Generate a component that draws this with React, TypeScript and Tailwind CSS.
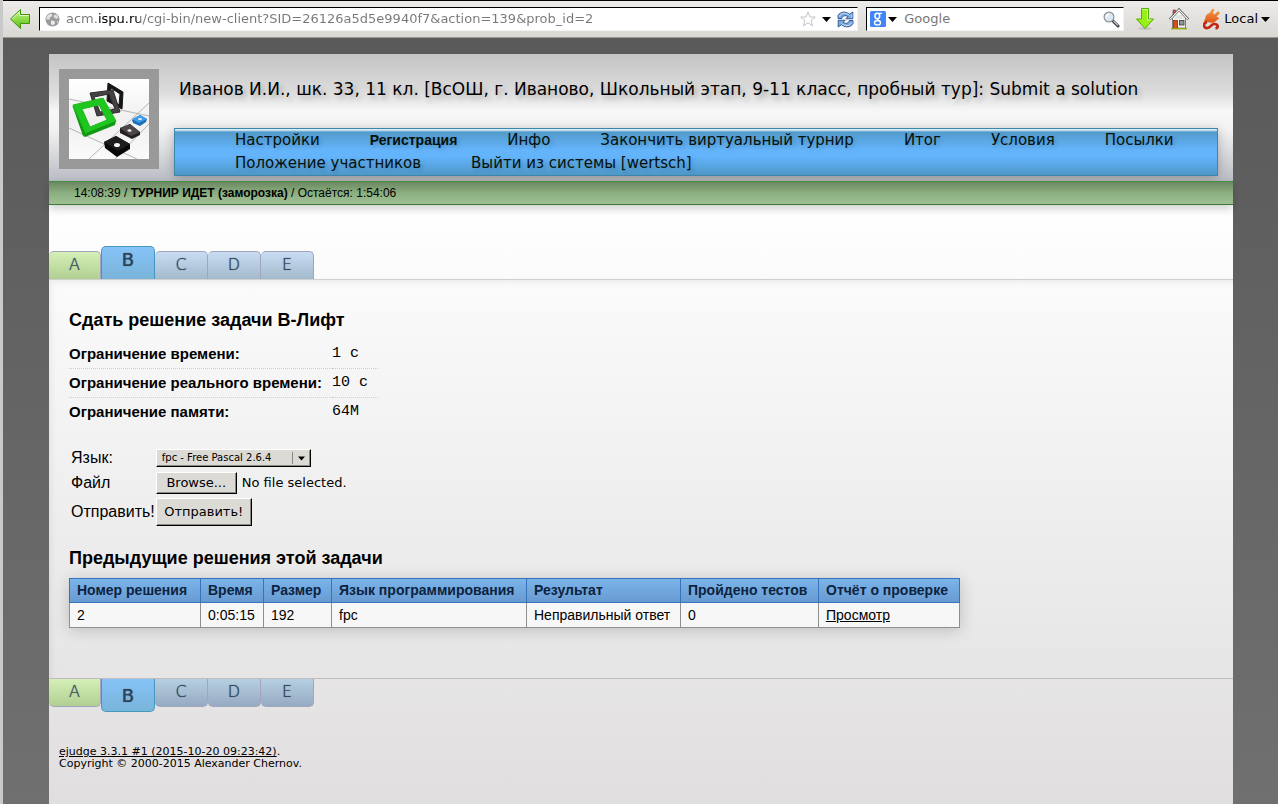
import { useRef } from 'react';

type Tab = { id: string; state: 'solved' | 'active' | 'idle' };

const tabs: Tab[] = [
  { id: 'A', state: 'solved' },
  { id: 'B', state: 'active' },
  { id: 'C', state: 'idle' },
  { id: 'D', state: 'idle' },
  { id: 'E', state: 'idle' },
];

const menu = [
  { label: 'Настройки' },
  { label: 'Регистрация', bold: true },
  { label: 'Инфо' },
  { label: 'Закончить виртуальный турнир' },
  { label: 'Итог' },
  { label: 'Условия' },
  { label: 'Посылки' },
  { label: 'Положение участников' },
  { label: 'Выйти из системы [wertsch]' },
];

const limits = [
  { label: 'Ограничение времени:', value: '1 с' },
  { label: 'Ограничение реального времени:', value: '10 с' },
  { label: 'Ограничение памяти:', value: '64M' },
];

const columns = [
  { name: 'Номер решения', width: 'w-[131px]' },
  { name: 'Время', width: 'w-[63px]' },
  { name: 'Размер', width: 'w-[68px]' },
  { name: 'Язык программирования', width: 'w-[195px]' },
  { name: 'Результат', width: 'w-[154px]' },
  { name: 'Пройдено тестов', width: 'w-[138px]' },
  { name: 'Отчёт о проверке', width: 'w-[141px]' },
];
const runs = [['2', '0:05:15', '192', 'fpc', 'Неправильный ответ', '0']];

const bevel =
  'bg-[#dcdad5] border border-t-white border-l-white border-r-black border-b-black shadow-[inset_-1px_-1px_0_#8b8984]';

const sunken = 'border border-t-black border-l-black border-r-[#f4f3f1] border-b-[#f4f3f1] bg-white';

function Caret({ className = '' }: { className?: string }) {
  return (
    <svg viewBox="0 0 9 5" className={`w-[9px] h-[5px] shrink-0 ${className}`}>
      <path d="M0 0h9L4.500 5z" fill="#000" />
    </svg>
  );
}

function BackIcon() {
  return (
    <svg viewBox="0 0 22 22" className="w-[22px] h-[22px]">
      <defs>
        <linearGradient id="back" x1="0" y1="0" x2="0" y2="1">
          <stop offset="0" stopColor="#c3f08b" />
          <stop offset=".5" stopColor="#8fdc4a" />
          <stop offset="1" stopColor="#54b811" />
        </linearGradient>
      </defs>
      <path d="M1.500 11 11.500 1.500V6.500H20.500V15.500H11.500V20.500z" fill="url(#back)" stroke="#3f9408" strokeLinejoin="round" />
      <path d="M3 11 10.500 4V7.500H19.500" fill="none" stroke="#e2fbc4" />
    </svg>
  );
}

function GlobeIcon() {
  return (
    <svg viewBox="0 0 15 15" className="w-[15px] h-[15px] shrink-0">
      <circle cx="7.500" cy="7.500" r="7" fill="#9b9b9b" />
      <path d="M3 3 6 1.500 7.500 3 6 5 4.500 5.500 5 8 3 7 1.500 8 1.500 5.500z" fill="#e4e4e4" />
      <path d="M9 3 11.500 2.500 13.500 5 12 7 9.500 6 8.500 4.500z" fill="#dedede" />
      <path d="M6 8.500 9.500 9 10 11 8 13.500 6 12z" fill="#ececec" />
      <path d="M12 9h1.500l-1 2.500z" fill="#ddd" />
    </svg>
  );
}

function StarIcon() {
  return (
    <svg viewBox="0 0 16 16" className="w-4 h-4 shrink-0">
      <path d="M8 .8 10 6h5.300l-4.200 3.400 1.600 5.600L8 11.700 3.300 15l1.600-5.600L.7 6H6z" fill="#fff" stroke="#c4c4c4" strokeLinejoin="round" />
    </svg>
  );
}

function ReloadIcon() {
  return (
    <svg viewBox="0 0 17 17" className="w-[17px] h-[17px] shrink-0">
      <g stroke="#234f8e" strokeWidth=".9" strokeLinejoin="round" fill="#7fa9de">
        <path d="M1 7.500V4.500C3 .8 8.500-.2 12.500 3.300L15.800 1V7.800H8.800L11 5.600C8.500 4 5.500 4.500 4.800 7.500z" />
        <path d="M16 9.500V12.500C14 16.200 8.500 17.200 4.500 13.700L1.200 16V9.200H8.200L6 11.400C8.500 13 11.500 12.500 12.200 9.500z" />
      </g>
      <path d="M2 5.500C4.500 1.500 9 1.500 12.500 4.500M14.800 2.800V6.800M15 11.500C12.500 15.500 8 15.500 4.500 12.500" fill="none" stroke="#c9def7" strokeWidth=".9" />
    </svg>
  );
}

function GoogleIcon() {
  return (
    <svg viewBox="0 0 16 16" className="w-4 h-4 shrink-0">
      <rect width="16" height="16" rx="1.500" fill="#4285f4" />
      <g fill="none" stroke="#fff">
        <ellipse cx="7.300" cy="5" rx="2.400" ry="2.700" strokeWidth="1.500" />
        <path d="M8.500 2.400H12M8 7.600C6.500 9 9.500 9 10 11" strokeWidth="1.200" />
        <ellipse cx="7.500" cy="11.700" rx="3" ry="2.200" strokeWidth="1.300" />
      </g>
    </svg>
  );
}

function MagnifierIcon() {
  return (
    <svg viewBox="0 0 17 17" className="w-[17px] h-[17px] shrink-0">
      <path d="M10 10 15 15" stroke="#3a3a3a" strokeWidth="3" strokeLinecap="round" />
      <path d="M10.500 10 15 14.500" stroke="#c4c4c4" strokeWidth="1.200" />
      <circle cx="6" cy="6" r="4.900" fill="#dbe9f7" stroke="#929292" strokeWidth="1.200" />
      <path d="M3.500 6A2.600 2.600 0 0 1 6 3.300" fill="none" stroke="#fff" strokeWidth="1.300" />
    </svg>
  );
}

function DownloadIcon() {
  return (
    <svg viewBox="0 0 20 24" className="w-5 h-6">
      <ellipse cx="10" cy="21.500" rx="7" ry="1.500" fill="#c5c3be" />
      <path d="M6.500 1.500h7v10.500h5L10 21.500 1.500 12h5z" fill="#99f018" stroke="#54ad08" strokeLinejoin="round" />
      <path d="M7.500 2.500h5V13h3.500" fill="none" stroke="#d5fb8f" />
    </svg>
  );
}

function HomeIcon() {
  return (
    <svg viewBox="0 0 20 22" className="w-5 h-[22px]">
      <path d="M4 2h2.500V6L4 8z" fill="#d44" stroke="#555" strokeWidth=".7" />
      <path d="M3.500 10 10 3 16.500 10V20h-13z" fill="#f7f7f5" stroke="#666" strokeWidth=".8" />
      <path d="M7 8h6M5.500 10h9" stroke="#d0d0d0" />
      <path d="M.8 11.300 10 1.500 19.200 11.300" fill="none" stroke="#484848" strokeWidth="2.200" />
      <path d="M1.200 11.200 10 1.900 18.800 11.200" fill="none" stroke="#fff" strokeWidth="1.200" />
      <rect x="4.500" y="12.500" width="4" height="8" fill="#d4501c" stroke="#8a2b07" strokeWidth=".8" />
      <rect x="10.500" y="12.500" width="4.500" height="4.500" fill="#8d9a94" stroke="#444" strokeWidth=".9" />
      <path d="M2 20.700h16" stroke="#9aa80c" strokeWidth="1.400" />
    </svg>
  );
}

function PlugIcon() {
  return (
    <svg viewBox="0 0 18 22" className="w-[18px] h-[22px]">
      <defs>
        <linearGradient id="plug" x1="0" y1="0" x2="0" y2="1">
          <stop offset="0" stopColor="#f7a04a" />
          <stop offset="1" stopColor="#dc5512" />
        </linearGradient>
      </defs>
      <path d="M6.500 5 9.500.5 11.500 1.500 10 5 11.500 6.500 15 3 17 5 13.500 8.500 16.500 10.500 14 12C11.500 15 8 15.500 5 14L2.500 15 1 12.500 2.500 10.500C2 8 3.500 6 6.500 5z" fill="url(#plug)" />
      <path d="M4 14C-.5 15 .5 20.500 4.500 20 8 19.500 8 16 11.500 16 15 16 16 19.500 12.500 20.500" fill="none" stroke="#c32512" strokeWidth="2.700" />
    </svg>
  );
}

function Logo() {
  return (
    <svg viewBox="0 0 80 80" className="w-20 h-20">
      <defs>
        <linearGradient id="floor" x1="0" y1="0" x2="0" y2="1">
          <stop offset="0" stopColor="#ffffff" />
          <stop offset=".5" stopColor="#f0f0f0" />
          <stop offset="1" stopColor="#fafafa" />
        </linearGradient>
      </defs>
      <rect width="80" height="80" fill="url(#floor)" />
      <g stroke="#a4a4a4" strokeWidth=".8" fill="none">
        <path d="M0 20 80 37M0 49 68 80M80 24 20 80M80 45 46 80" />
      </g>
      <path fillRule="evenodd" d="M39 4 54 13 53 30 38 22zM42 9 41 20 50 26 51 15z" fill="#161616" stroke="#161616" />
      <path fillRule="evenodd" d="M21 14 44 11 51 33 28 37zM25 18 31 33 46 30 40 15z" fill="#464143" stroke="#302d2e" />
      <path d="M3.500 27 14 57 18 54 7 26z" fill="#0f970f" />
      <path fillRule="evenodd" d="M4 26 34 19 47 42 17 55zM13 30 21 48 38 41 30 26z" fill="#20c620" stroke="#1fbc1f" strokeLinejoin="round" />
      <path d="M14 57 17 54 47 42 46 46 16 58z" fill="#139813" />
      <path d="M63 41 71 36 78 40 77 43 71 47 64 44z" fill="#1c6cb8" />
      <path d="M63 40 71 36 78 40 70 44z" fill="#3e9be8" />
      <ellipse cx="71" cy="40" rx="2" ry="1" fill="#e5f2ff" />
      <path d="M51 49 61 45 71 53 71 56 63 60 51 54z" fill="#242122" />
      <path d="M51 49 61 45 71 53 62 57z" fill="#4c4648" />
      <path d="m58 51 3-1 2 2-3 1z" fill="#f4f4f4" />
      <path d="M35 63 47 57 61 65 61 70 48 78 36 69z" fill="#080808" />
      <path d="M35 63 47 57 61 65 49 72z" fill="#1d1d1d" />
      <ellipse cx="48" cy="66" rx="3" ry="2" fill="#f4f4f4" />
    </svg>
  );
}

function BrowserBar() {
  return (
    <div className="flex h-[38px] items-center border-t border-b border-t-black border-b-[#9b998f] bg-gradient-to-b from-[#ecebe9] to-[#dad8d3] font-['DejaVu_Sans',sans-serif] text-[13px]">
      <button aria-label="Back" className="ml-[6px] mr-2">
        <BackIcon />
      </button>
      <div className={`flex h-6 min-w-0 flex-1 items-center pl-[5px] pr-[3px] ${sunken}`}>
        <GlobeIcon />
        <input
          aria-label="Address"
          defaultValue="acm.ispu.ru/cgi-bin/new-client?SID=26126a5d5e9940f7&action=139&prob_id=2"
          className="ml-[6px] min-w-0 flex-1 bg-[linear-gradient(90deg,#777_31px,#000_31px,#000_74px,#777_74px)] bg-clip-text text-transparent outline-none"
        />
        <StarIcon />
        <Caret className="mx-[6px]" />
        <button aria-label="Reload">
          <ReloadIcon />
        </button>
      </div>
      <div className={`ml-2 flex h-6 w-[258px] items-center px-[3px] ${sunken}`}>
        <GoogleIcon />
        <Caret className="mx-[2px]" />
        <input aria-label="Search" placeholder="Google" className="ml-[5px] min-w-0 flex-1 outline-none placeholder:text-[#777]" />
        <MagnifierIcon />
      </div>
      <button aria-label="Downloads" className="ml-[11px]">
        <DownloadIcon />
      </button>
      <button aria-label="Home" className="ml-[14px]">
        <HomeIcon />
      </button>
      <button className="ml-[14px] mr-2 flex items-center">
        <PlugIcon />
        <span className="mx-[3px]">Local</span>
        <Caret />
      </button>
    </div>
  );
}

function TabBar({ bottom = false }: { bottom?: boolean }) {
  return (
    <nav
      className={`flex h-[34px] font-['DejaVu_Sans',sans-serif] text-[#2c4256] ${
        bottom ? 'items-start border-t border-[#bebcbd]' : 'items-end border-b border-[#cfcfcf]'
      }`}
    >
      {tabs.map((tab) => {
        const round = bottom ? 'rounded-b-[5px] border-t-0' : 'rounded-t-[5px] border-b-0';
        if (tab.state === 'active') {
          return (
            <a
              key={tab.id}
              href="#"
              className={`flex h-[33px] w-[54px] shrink-0 justify-center border border-[#4597bd] bg-gradient-to-b from-[#86c3f7] to-[#79b4da] text-lg leading-[26px] [text-shadow:0_0_1px_#34495c] ${round} ${bottom ? 'pt-1' : ''}`}
            >
              {tab.id}
            </a>
          );
        }
        const color =
          tab.state === 'solved'
            ? 'w-[52px] from-[#d5f0b6] to-[#b1cf93]'
            : bottom
              ? 'w-[53px] from-[#b7cfe1] to-[#95abc3]'
              : 'w-[53px] from-[#c8ddf2] to-[#a3b9cc]';
        return (
          <a
            key={tab.id}
            href="#"
            className={`flex h-7 shrink-0 justify-center border border-l-0 border-[#a2a4bd] bg-gradient-to-b text-base font-extralight leading-[26px] [text-shadow:0_0_1px_#34495c] ${color} ${round}`}
          >
            {tab.id}
          </a>
        );
      })}
    </nav>
  );
}

function SubmitForm() {
  const fileRef = useRef<HTMLInputElement>(null);

  return (
    <form
      onSubmit={(e) => e.preventDefault()}
      className="mt-[22px] ml-[2px] grid grid-cols-[auto_1fr] items-center justify-start gap-x-px gap-y-1"
    >
      <label htmlFor="lang" className="text-base leading-5">Язык:</label>
      <div className="grid w-[155px] items-center font-['DejaVu_Sans',sans-serif]">
        <select id="lang" className={`col-start-1 row-start-1 h-[18px] appearance-none pl-[5px] text-[10px] leading-4 ${bevel}`}>
          <option>fpc - Free Pascal 2.6.4</option>
        </select>
        <span className="pointer-events-none col-start-1 row-start-1 mr-[6px] flex h-3 items-center justify-self-end border-l border-[#8b8984] pl-[5px]">
          <Caret className="w-[7px]!" />
        </span>
      </div>
      <label htmlFor="file" className="text-base leading-5">Файл</label>
      <div className="flex items-center font-['DejaVu_Sans',sans-serif] text-[13px]">
        <input ref={fileRef} id="file" type="file" className="hidden" />
        <button type="button" onClick={() => fileRef.current?.click()} className={`h-[22px] w-[81px] leading-5 ${bevel}`}>
          Browse...
        </button>
        <span className="ml-[5px]">No file selected.</span>
      </div>
      <label htmlFor="send" className="text-base leading-5">Отправить!</label>
      <button id="send" className={`h-7 w-24 justify-self-start font-['DejaVu_Sans',sans-serif] text-[13px] ${bevel}`}>
        Отправить!
      </button>
    </form>
  );
}

function RunsTable() {
  return (
    <table className="mt-[10px] border-collapse bg-[#f7f7f7] text-sm shadow-[0_2px_16px_#00000030]">
      <thead>
        <tr className="bg-gradient-to-b from-[#7ab5ea] to-[#6899d1]">
          {columns.map((col) => (
            <th key={col.name} className={`border border-[#3673bc] px-[7px] text-left leading-[23px] font-bold text-[#0d2340] ${col.width}`}>
              {col.name}
            </th>
          ))}
        </tr>
      </thead>
      <tbody>
        {runs.map((run) => (
          <tr key={run[0]}>
            {run.map((cell, i) => (
              <td key={i} className="border border-[#8f8f8f] px-[7px] leading-6">{cell}</td>
            ))}
            <td className="border border-[#8f8f8f] px-[7px] leading-6">
              <a href="#" className="underline">Просмотр</a>
            </td>
          </tr>
        ))}
      </tbody>
    </table>
  );
}

export default function App() {
  return (
    <div className="flex min-h-screen flex-col border-l-[3px] border-[#c9c9c9] bg-white font-['Liberation_Sans',sans-serif] text-black">
      <BrowserBar />
      <div className="flex flex-1 flex-col bg-gradient-to-b from-[#5a5a5a] to-[#707070] pt-4 pr-[45px] pl-[46px]">
        <div className="flex flex-1 flex-col bg-gradient-to-b from-white from-20% to-[#e0dedf]">
          <header className="flex bg-[linear-gradient(#c4c4c4,#dcdcdc_30%,#f7f7f7_45%,#f2f2f2_60%,#b9bcc4)] pt-[15px] pr-[15px] pb-[5px] pl-[10px]">
            <a href="#" aria-label="ejudge" className="h-[100px] shrink-0 border-10 border-[#999]">
              <Logo />
            </a>
            <div className="ml-[15px] flex-1">
              <h1 className="h-[59px] pt-[9px] pl-[5px] font-['DejaVu_Sans',sans-serif] text-[17px] leading-[23px] [text-shadow:3px_4px_5px_#00000038]">
                Иванов И.И., шк. 33, 11 кл. [ВсОШ, г. Иваново, Школьный этап, 9-11 класс, пробный тур]: Submit a solution
              </h1>
              <nav className="border border-[#3d86a8] bg-[linear-gradient(#d8ecf8_1px,#539bcb_3px,#64b4fc_45%,#64b4fc_60%,#4d97c8)] pl-[60px] shadow-[0_2px_10px_#00000040]">
                <ul className="flex flex-wrap gap-x-[50px] font-['DejaVu_Sans',sans-serif] text-[15px] leading-[23px] text-[#03110c] [text-shadow:2px_2px_4px_#0003]">
                  {menu.map((item) => (
                    <li key={item.label}>
                      <a href="#" className={`block ${item.bold ? "font-['Liberation_Sans',sans-serif] text-sm leading-[23px] font-bold" : ''}`}>
                        {item.label}
                      </a>
                    </li>
                  ))}
                </ul>
              </nav>
            </div>
          </header>
          <div className="border-t border-b border-t-[#43913f] border-b-[#377a36] bg-[linear-gradient(#6c8863,#8baf80_50%,#a0bf95)] pl-[25px] text-xs leading-[22px] shadow-[0_4px_8px_#0000002e]">
            14:08:39 / <b>ТУРНИР ИДЕТ (заморозка)</b> / Остаётся: 1:54:06
          </div>

          <div className="mt-[41px]">
            <TabBar />
          </div>
          <main className="px-5 pt-[30px] pb-[50px] shadow-[inset_8px_8px_10px_-8px_#00000018]">
            <h2 className="text-lg leading-5 font-bold">Сдать решение задачи B-Лифт</h2>
            <table className="mt-[10px] border-collapse text-[15px] leading-7">
              <tbody>
                {limits.map((row) => (
                  <tr key={row.label} className="border-b border-dotted border-[#ccc] last:border-b-0">
                    <th className="pr-[10px] text-left leading-7 font-bold">{row.label}</th>
                    <td className="pr-[10px] font-['Liberation_Mono',monospace] leading-7">{row.value}</td>
                  </tr>
                ))}
              </tbody>
            </table>
            <SubmitForm />
            <h2 className="mt-[22px] text-lg leading-5 font-bold">Предыдущие решения этой задачи</h2>
            <RunsTable />
          </main>
          <TabBar bottom />
          <footer className="mt-[34px] pb-5 pl-[10px] font-['DejaVu_Sans',sans-serif] text-[11px] leading-3">
            <a href="#" className="underline">ejudge 3.3.1 #1 (2015-10-20 09:23:42)</a>.
            <br />
            Copyright © 2000-2015 Alexander Chernov.
          </footer>
        </div>
      </div>
    </div>
  );
}
